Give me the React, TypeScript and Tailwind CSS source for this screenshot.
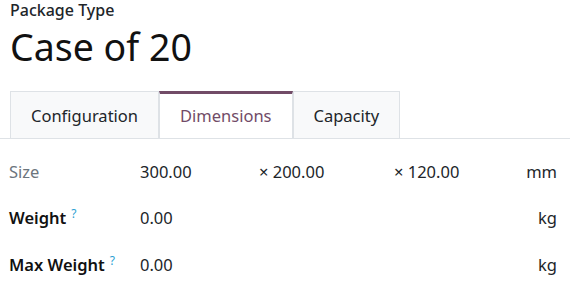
import React from "react";

const font = { fontFamily: '"Noto Sans", "Open Sans", sans-serif' };

function Tab({ label, active }: { label: string; active?: boolean }) {
  if (active) {
    return (
      <div className="flex h-[47px] items-center border-x border-t-[3px] border-x-[#dee2e6] border-t-[#714b67] bg-white px-[20px] text-[16.5px] text-[#714b67] -mb-px">
        {label}
      </div>
    );
  }
  return (
    <div className="flex h-[47px] items-center border border-b-0 border-[#dee2e6] bg-[#f8f9fa] px-[20px] pt-[2px] text-[16.5px] text-[#212529]">
      {label}
    </div>
  );
}

function Help() {
  return <sup className="ml-[5px] text-[12px] font-normal text-[#2b9fd3]">?</sup>;
}

export default function App() {
  return (
    <div className="h-[294px] w-[570px] overflow-hidden bg-white text-[#212529]" style={font}>
      <div className="px-[10px]">
        <div className="h-[20px] text-[16px] font-medium leading-[20px] text-[#212529]">Package Type</div>
        <h1 className="mt-[2px] text-[37.5px] leading-[50px] text-[#111]">Case of 20</h1>
      </div>

      <div className="mt-[19px] flex border-b border-[#dee2e6] pl-[10px]">
        <Tab label="Configuration" />
        <Tab label="Dimensions" active />
        <Tab label="Capacity" />
      </div>

      <div className="pl-[9px] pr-[13px] pt-[19px] text-[16.5px]">
        <div className="flex h-[28px] items-center">
          <div className="w-[131px] text-[#6c757d]">Size</div>
          <div className="w-[119px]">300.00</div>
          <div className="w-[135px]">× 200.00</div>
          <div className="flex-1">× 120.00</div>
          <div>mm</div>
        </div>
        <div className="mt-[18px] flex h-[28px] items-center">
          <div className="w-[131px] font-semibold text-[#111]">
            Weight<Help />
          </div>
          <div className="flex-1">0.00</div>
          <div>kg</div>
        </div>
        <div className="mt-[19px] flex h-[28px] items-center">
          <div className="w-[131px] font-semibold text-[#111]">
            Max Weight<Help />
          </div>
          <div className="flex-1">0.00</div>
          <div>kg</div>
        </div>
      </div>
    </div>
  );
}
